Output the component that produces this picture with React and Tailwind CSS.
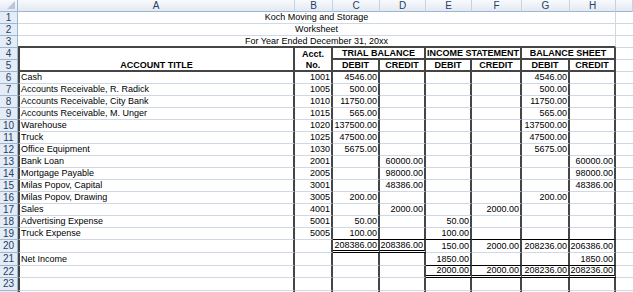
import React from "react";

const colLetters = ["A", "B", "C", "D", "E", "F", "G", "H", ""];

const titles = {
  1: "Koch Moving and Storage",
  2: "Worksheet",
  3: "For Year Ended December 31, 20xx",
};

// row -> [title, acct, C, D, E, F, G, H]
const data = {
  6: ["Cash", "1001", "4546.00", "", "", "", "4546.00", ""],
  7: ["Accounts Receivable, R. Radick", "1005", "500.00", "", "", "", "500.00", ""],
  8: ["Accounts Receivable, City Bank", "1010", "11750.00", "", "", "", "11750.00", ""],
  9: ["Accounts Receivable, M. Unger", "1015", "565.00", "", "", "", "565.00", ""],
  10: ["Warehouse", "1020", "137500.00", "", "", "", "137500.00", ""],
  11: ["Truck", "1025", "47500.00", "", "", "", "47500.00", ""],
  12: ["Office Equipment", "1030", "5675.00", "", "", "", "5675.00", ""],
  13: ["Bank Loan", "2001", "", "60000.00", "", "", "", "60000.00"],
  14: ["Mortgage Payable", "2005", "", "98000.00", "", "", "", "98000.00"],
  15: ["Milas Popov, Capital", "3001", "", "48386.00", "", "", "", "48386.00"],
  16: ["Milas Popov, Drawing", "3005", "200.00", "", "", "", "200.00", ""],
  17: ["Sales", "4001", "", "2000.00", "", "2000.00", "", ""],
  18: ["Advertising Expense", "5001", "50.00", "", "50.00", "", "", ""],
  19: ["Truck Expense", "5005", "100.00", "", "100.00", "", "", ""],
  20: ["", "", "208386.00", "208386.00", "150.00", "2000.00", "208236.00", "206386.00"],
  21: ["Net Income", "", "", "", "1850.00", "", "", "1850.00"],
  22: ["", "", "", "", "2000.00", "2000.00", "208236.00", "208236.00"],
  23: ["", "", "", "", "", "", "", ""],
};

const rowHeights = {
  20: "h-[13px]",
  21: "h-[13px]",
  23: "h-[13px]",
};

function bottomFor(r, c) {
  // c: 0 = A ... 7 = H
  if (r === 19 && c >= 2) return "border-b border-b-black";
  if (r === 20 && (c === 2 || c === 3)) return "border-b-[3px] [border-bottom-style:double] border-b-black";
  if (r === 21 && c >= 4) return "border-b border-b-black";
  if (r === 22 && c >= 4) return "border-b-[3px] [border-bottom-style:double] border-b-black";
  return "border-b border-b-[#d0d7e5]";
}

function RowHead({ n, h }) {
  return (
    <div
      className={`${h} flex items-center justify-center bg-[#e4ecf7] border-r border-b border-[#9eb6ce] text-[10px] leading-none text-[#27415f]`}
    >
      {n}
    </div>
  );
}

function ColI({ h }) {
  return <div className={`${h} border-b border-[#d0d7e5]`} />;
}

function DataRow({ r, label = true }) {
  const h = rowHeights[r] || "h-[12px]";
  const cells = data[r] || ["", "", "", "", "", "", "", ""];
  return (
    <>
      <RowHead n={label ? r : ""} h={h} />
      {cells.map((v, c) => (
        <div
          key={c}
          className={`${h} flex items-center overflow-visible whitespace-nowrap border-r-2 border-r-[#454545] ${bottomFor(r, c)} ${
            c === 0 ? "border-l-2 border-l-[#454545] pl-[1px] justify-start" : "pr-[1px] justify-end"
          }`}
        >
          {v}
        </div>
      ))}
      <ColI h={h} />
    </>
  );
}

export default function App() {
  return (
    <div className="w-[633px] h-[292px] overflow-hidden bg-white font-['Liberation_Sans',Arial,sans-serif] text-[9px] leading-none text-black">
      <div className="grid grid-cols-[18px_277px_38px_47px_46px_46px_50px_48px_46px_17px]">
        {/* column headers */}
        <div className="h-[12px] relative bg-linear-to-b from-[#f8fafd] to-[#e3e9f2] border-r border-b border-[#9eb6ce]">
          <svg className="absolute right-[2px] bottom-[2px]" width="8" height="8" viewBox="0 0 8 8">
            <polygon points="8,0 8,8 0,8" fill="#b7c6da" />
          </svg>
        </div>
        {colLetters.map((l, i) => (
          <div
            key={i}
            className="h-[12px] flex items-center justify-center bg-linear-to-b from-[#f8fafd] to-[#e3e9f2] border-r border-b border-r-[#c5d2e3] border-b-[#9eb6ce] text-[10px] text-[#27415f]"
          >
            {l}
          </div>
        ))}

        {/* title rows */}
        {[1, 2, 3].map((r) => (
          <React.Fragment key={r}>
            <RowHead n={r} h="h-[12px]" />
            <div
              className={`col-span-8 h-[12px] flex items-center justify-center border-r border-r-[#d0d7e5] ${
                r === 3 ? "border-b-2 border-b-[#454545]" : "border-b border-b-[#d0d7e5]"
              }`}
            >
              {titles[r]}
            </div>
            <ColI h="h-[12px]" />
          </React.Fragment>
        ))}

        {/* row 4 */}
        <RowHead n={4} h="h-[12px]" />
        <div className="h-[12px] border-l-2 border-r-2 border-[#454545]" />
        <div className="h-[12px] flex items-center justify-center font-bold border-r-2 border-[#454545]">Acct.</div>
        <div className="col-span-2 h-[12px] flex items-center justify-center font-bold border-r-2 border-b-2 border-[#454545]">
          TRIAL BALANCE
        </div>
        <div className="col-span-2 h-[12px] flex items-center justify-center font-bold border-r-2 border-b-2 border-[#454545]">
          INCOME STATEMENT
        </div>
        <div className="col-span-2 h-[12px] flex items-center justify-center font-bold border-r-2 border-b-2 border-[#454545]">
          BALANCE SHEET
        </div>
        <ColI h="h-[12px]" />

        {/* row 5 */}
        <RowHead n={5} h="h-[12px]" />
        <div className="h-[12px] flex items-center justify-center font-bold border-l-2 border-r-2 border-b-2 border-[#454545]">
          ACCOUNT TITLE
        </div>
        <div className="h-[12px] flex items-center justify-center font-bold border-r-2 border-b-2 border-[#454545]">No.</div>
        {["DEBIT", "CREDIT", "DEBIT", "CREDIT", "DEBIT", "CREDIT"].map((t, i) => (
          <div
            key={i}
            className="h-[12px] flex items-center justify-center font-bold border-r-2 border-b-2 border-[#454545]"
          >
            {t}
          </div>
        ))}
        <ColI h="h-[12px]" />

        {/* data rows */}
        {Array.from({ length: 18 }, (_, i) => i + 6).map((r) => (
          <DataRow key={r} r={r} />
        ))}
        <DataRow r={24} label={false} />
      </div>
    </div>
  );
}
